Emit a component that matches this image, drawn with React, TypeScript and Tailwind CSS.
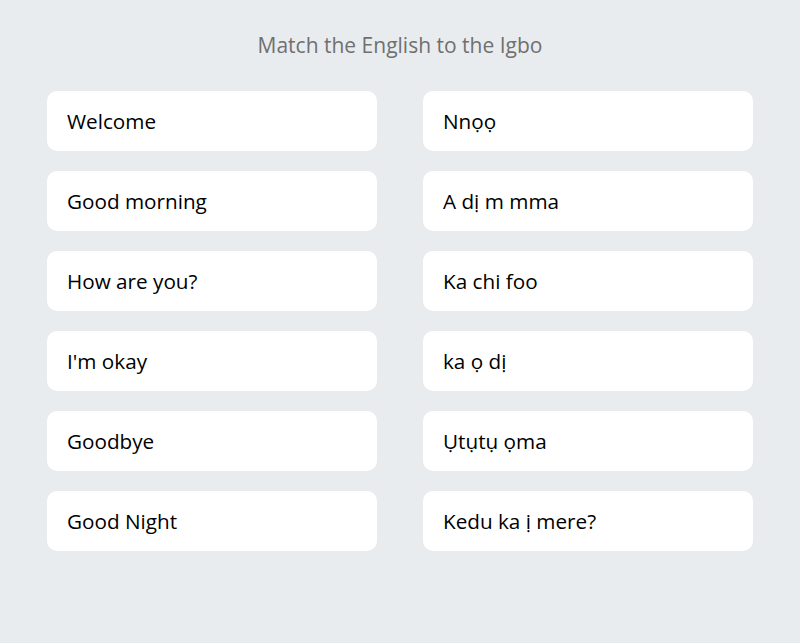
const PAIRS = [
  ['Welcome', 'Nnọọ'],
  ['Good morning', 'A dị m mma'],
  ['How are you?', 'Ka chi foo'],
  ["I'm okay", 'ka ọ dị'],
  ['Goodbye', 'Ụtụtụ ọma'],
  ['Good Night', 'Kedu ka ị mere?'],
];

function Card({ label }: { label: string }) {
  return (
    <div className="h-[60px] bg-white rounded-[10px] flex items-center px-5 pt-[2px] text-[20.7px] text-black">
      {label}
    </div>
  );
}

export default function App() {
  return (
    <div
      className="w-[800px] h-[643px] bg-[#e9ecef] px-[47px] pt-[30px]"
      style={{ fontFamily: '"Open Sans", "Noto Sans", sans-serif' }}
    >
      <h1 className="text-center text-[21px] text-[#707070] leading-[30px]">
        Match the English to the Igbo
      </h1>
      <div className="mt-[31px] grid grid-cols-2 gap-x-[46px] gap-y-5">
        {PAIRS.map(([en, ig]) => (
          <>
            <Card key={en} label={en} />
            <Card key={ig} label={ig} />
          </>
        ))}
      </div>
    </div>
  );
}
